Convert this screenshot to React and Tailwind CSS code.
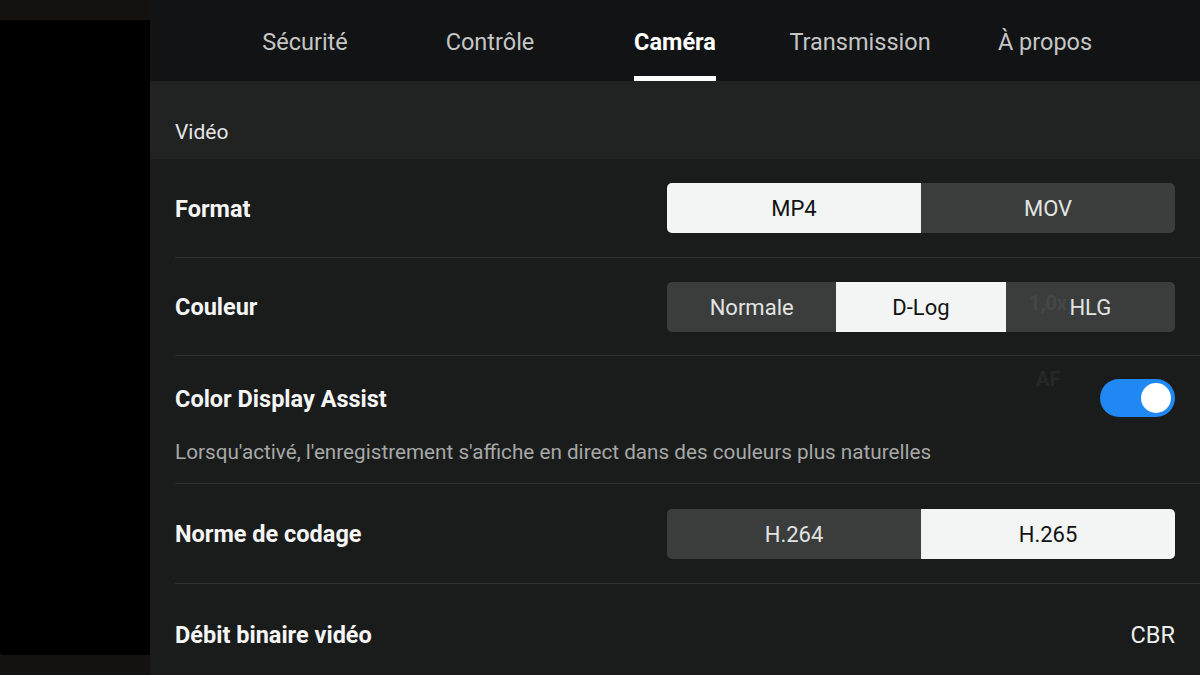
import React, { useState } from 'react';

const tabs = ['Sécurité', 'Contrôle', 'Caméra', 'Transmission', 'À propos'];

const Segmented = ({ options, value, onChange }) => (
    <div className="flex w-[508px] h-[50px] rounded-[5px] overflow-hidden bg-[#3a3d3b]">
        {options.map((opt) => (
            <button
                key={opt}
                onClick={() => onChange(opt)}
                className={
                    opt === value
                        ? 'flex-1 flex items-center justify-center pt-[1px] text-[22px] bg-[#f2f5f3] text-[#121212]'
                        : 'flex-1 flex items-center justify-center pt-[1px] text-[22px] text-[#e2e4e3]'
                }
            >
                {opt}
            </button>
        ))}
    </div>
);

const Row = ({ label, height, children }) => (
    <div className={`shrink-0 ml-[25px] border-b border-[#2e302f] flex items-center justify-between pr-[25px] ${height}`}>
        <span className="pt-[3px] text-[23.5px] font-bold text-[#f5f5f5]">{label}</span>
        {children}
    </div>
);

const App = () => {
    const [tab, setTab] = useState('Caméra');
    const [format, setFormat] = useState('MP4');
    const [color, setColor] = useState('D-Log');
    const [codec, setCodec] = useState('H.265');
    const [assist, setAssist] = useState(true);

    return (
        <div
            className="flex w-[1200px] h-[675px] overflow-hidden bg-[#131211]"
            style={{ fontFamily: 'Roboto, "Noto Sans", sans-serif' }}
        >
            {/* left preview */}
            <div className="w-[150px] py-[20px] flex">
                <div className="flex-1 bg-black rounded-bl-[4px]" />
            </div>

            {/* settings panel */}
            <div className="flex-1 flex flex-col bg-[#1a1c1b] overflow-hidden">
                <div className="shrink-0 h-[81px] bg-[#121314] flex justify-center">
                    {tabs.map((t) => (
                        <button
                            key={t}
                            onClick={() => setTab(t)}
                            className="w-[185px] h-full flex justify-center"
                        >
                            <span
                                className={
                                    t === tab
                                        ? 'relative h-full flex items-center pt-[4px] text-[23.5px] font-bold text-white'
                                        : 'relative h-full flex items-center pt-[4px] text-[23.5px] text-[#c4c6c5]'
                                }
                            >
                                {t}
                                {t === tab && (
                                    <span className="absolute left-0 right-0 bottom-0 h-[5px] bg-white" />
                                )}
                            </span>
                        </button>
                    ))}
                </div>

                <div className="shrink-0 h-[78px] bg-[#212322] flex items-end pb-[11px] pl-[25px]">
                    <span className="text-[21px] text-[#e4e6e5]">Vidéo</span>
                </div>

                <Row label="Format" height="h-[99px]">
                    <Segmented options={['MP4', 'MOV']} value={format} onChange={setFormat} />
                </Row>

                <Row label="Couleur" height="h-[98px]">
                    <div className="relative">
                        <Segmented options={['Normale', 'D-Log', 'HLG']} value={color} onChange={setColor} />
                        <span className="absolute left-[362px] top-[6px] text-[20px] font-bold text-white/5">1,0x</span>
                    </div>
                </Row>

                <div className="shrink-0 ml-[25px] border-b border-[#2e302f] h-[128px] pr-[25px] flex flex-col relative">
                    <div className="flex items-center justify-between pt-[23px]">
                        <span className="pt-[3px] text-[23.5px] font-bold text-[#f5f5f5]">Color Display Assist</span>
                        <button
                            onClick={() => setAssist(!assist)}
                            className={
                                assist
                                    ? 'w-[75px] h-[38px] rounded-full bg-[#1f88f2] flex items-center justify-end px-[4px]'
                                    : 'w-[75px] h-[38px] rounded-full bg-[#3a3d3b] flex items-center justify-start px-[4px]'
                            }
                        >
                            <span className="w-[30px] h-[30px] rounded-full bg-white" />
                        </button>
                    </div>
                    <p className="mt-[20px] text-[20.7px] text-[#a6a8a7]">
                        Lorsqu'activé, l'enregistrement s'affiche en direct dans des couleurs plus naturelles
                    </p>
                    <span className="absolute left-[861px] top-[8px] text-[20px] font-bold text-white/5">AF</span>
                </div>

                <Row label="Norme de codage" height="h-[100px]">
                    <Segmented options={['H.264', 'H.265']} value={codec} onChange={setCodec} />
                </Row>

                <div className="shrink-0 ml-[25px] pr-[25px] h-[100px] flex items-center justify-between">
                    <span className="pt-[3px] text-[23.5px] font-bold text-[#f5f5f5]">Débit binaire vidéo</span>
                    <span className="pt-[3px] text-[23.5px] text-[#eceeed]">CBR</span>
                </div>
            </div>
        </div>
    );
};

export default App;
